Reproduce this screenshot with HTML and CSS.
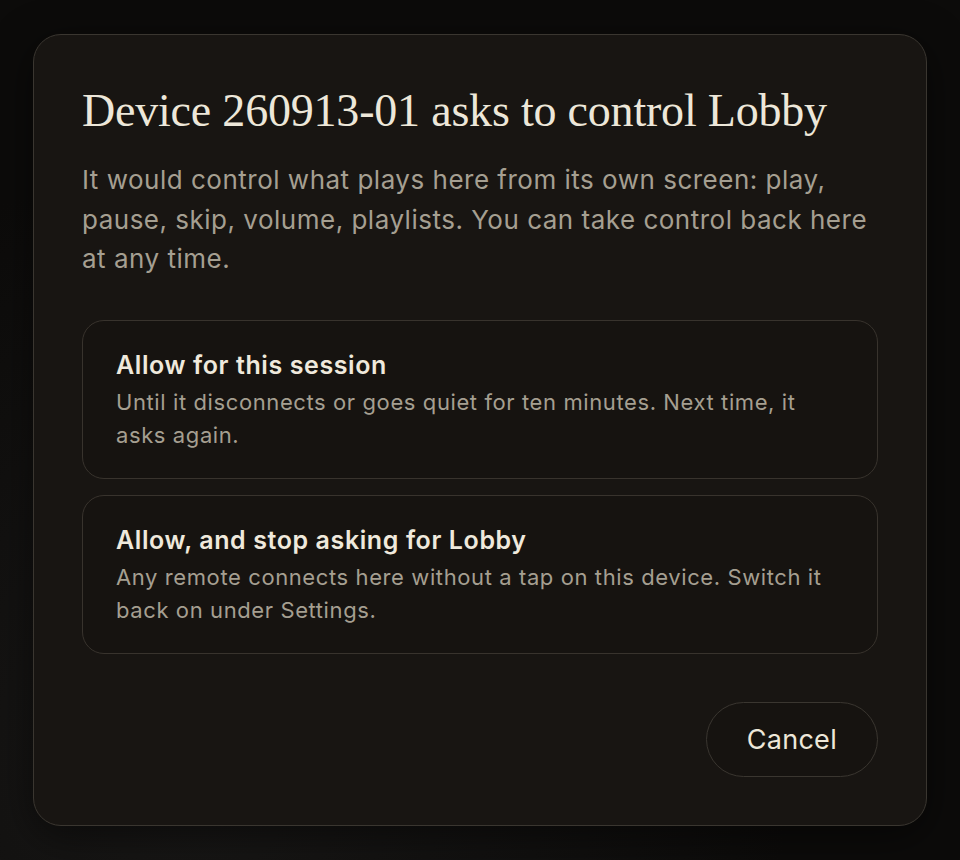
FILE: index.html
```html
<!DOCTYPE html>
<html lang="en">
<head>
<meta charset="utf-8">
<title>Remote control request</title>
<link rel="stylesheet" href="styles.css">
</head>
<body>
<div class="backdrop">
  <section class="dialog" role="dialog" aria-labelledby="dlg-title">
    <h1 id="dlg-title" class="dialog-title">Device 260913-01 asks to control Lobby</h1>
    <p class="dialog-text">It would control what plays here from its own screen: play, pause, skip, volume, playlists. You can take control back here at any time.</p>
    <div class="options">
      <button class="option" type="button">
        <span class="option-title">Allow for this session</span>
        <span class="option-desc">Until it disconnects or goes quiet for ten minutes. Next time, it asks again.</span>
      </button>
      <button class="option" type="button">
        <span class="option-title">Allow, and stop asking for Lobby</span>
        <span class="option-desc">Any remote connects here without a tap on this device. Switch it back on under Settings.</span>
      </button>
    </div>
    <div class="actions">
      <button class="btn-cancel" type="button">Cancel</button>
    </div>
  </section>
</div>
</body>
</html>
```

FILE: styles.css
```css
* { box-sizing: border-box; }
html, body {
  margin: 0;
  height: 100%;
}
body {
  background: radial-gradient(ellipse at 20% 90%, #181716 0%, #0c0b0a 55%), #0c0b0a;
  font-family: "Inter", "Liberation Sans", sans-serif;
}
.backdrop {
  padding: 34px 33px;
}
.dialog {
  width: 894px;
  height: 792px;
  background: #181512;
  border: 1px solid #3a3630;
  border-radius: 28px;
  padding: 48px;
  display: flex;
  flex-direction: column;
  box-shadow: 0 10px 40px rgba(0,0,0,0.5);
}
.dialog-title {
  margin: 0;
  font-family: "Liberation Serif", "DejaVu Serif", serif;
  font-weight: 400;
  font-size: 46px;
  line-height: 56px;
  color: #ede7d9;
  letter-spacing: -0.2px;
}
.dialog-text {
  margin: 21px 0 0;
  font-size: 26px;
  line-height: 39.5px;
  letter-spacing: 0.5px;
  color: #a59f91;
}
.options {
  margin-top: 41px;
  display: flex;
  flex-direction: column;
  gap: 16px;
}
.option {
  display: flex;
  flex-direction: column;
  gap: 5px;
  text-align: left;
  background: #161310;
  border: 1px solid #38332d;
  border-radius: 22px;
  padding: 28px 32px 26px 33px;
  font-family: inherit;
  cursor: pointer;
}
.option-title {
  font-size: 25px;
  line-height: 32px;
  font-weight: 600;
  letter-spacing: 0.6px;
  color: #efe9dc;
}
.option-desc {
  font-size: 22px;
  line-height: 33px;
  letter-spacing: 0.6px;
  color: #a59f91;
}
.actions {
  margin-top: 48px;
  display: flex;
  justify-content: flex-end;
}
.btn-cancel {
  height: 75px;
  padding: 0 40px;
  border-radius: 999px;
  border: 1px solid #3a3630;
  background: #161310;
  color: #ede7d9;
  font-family: inherit;
  font-size: 27px;
  letter-spacing: 0.3px;
  cursor: pointer;
}
```
